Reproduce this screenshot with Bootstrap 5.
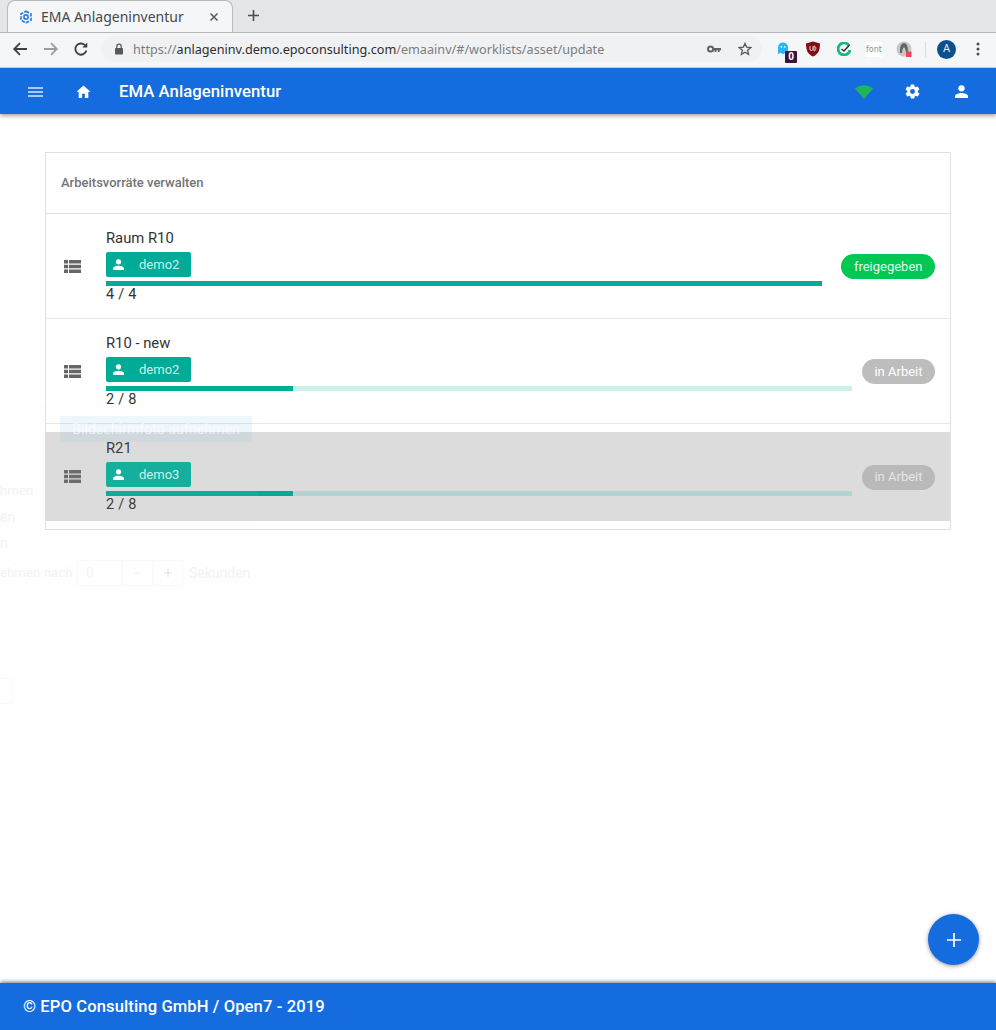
<!DOCTYPE html>
<html lang="de">
<head>
<meta charset="utf-8">
<title>EMA Anlageninventur</title>
<link href="https://cdn.jsdelivr.net/npm/bootstrap@5.3.0/dist/css/bootstrap.min.css" rel="stylesheet">
<style>
html,body{height:100%}
body{font-family:Roboto,"Liberation Sans",sans-serif;color:#333;background:#fff;width:996px;height:1030px;overflow:hidden;position:relative}
svg{flex-shrink:0}
.tabstrip{height:32px;background:#e4e6ea;padding-left:7px;position:relative}
.tabshape{width:226px;height:32px;background:#f5f6f8;border:1px solid #b8babd;border-bottom:0;border-radius:8px 8px 0 0;padding:0 13px 0 11px;font:14px "Noto Sans",Roboto,sans-serif;color:#45484c}
.tabtitle{margin-left:8px}
.tabx{margin-left:auto;font-size:0;line-height:0}
.newtab{position:absolute;left:247px;top:9px}
.toolstrip{height:36px;background:#f5f6f8;border-top:1px solid #b3b5b8;padding:0 0 2px 12px;border-bottom:1px solid #cfd3dc}
.navfwd{margin-left:15px}
.navreload{margin-left:14px}
.omnibox{width:661px;height:26px;flex-shrink:0;margin-left:12px;background:#f0f1f3;border-radius:13px;padding-left:13px;font:12.65px "Noto Sans",Roboto,sans-serif;color:#7b7e82;white-space:nowrap}
.omnibox b{font-weight:400;color:#2c2e31}
.lockglyph{margin-right:9px}
.keyicons{margin-left:auto;gap:17px;padding-right:10px}
.exticons{width:234px;flex-shrink:0;position:relative}
.ghosticon{margin-left:15px}
.extbadge{position:absolute;left:23px;top:11px;width:12px;height:12px;border-radius:1px;background:#3c1238;color:#fff;font-size:10px;font-weight:700;line-height:12px;text-align:center}
.fonticon{margin-left:15px;width:16px;font-size:8px;line-height:15px;text-align:center;color:#8d8f92;background:#fff;font-family:"DejaVu Sans",sans-serif}
.extsep{width:1px;height:15px;background:#d8dbe0;margin-left:13px}
.avatarbubble{width:19px;height:19px;background:#0b4f8c;color:#e8eef5;font-size:11px;margin-left:11px}
.appbar{height:46px;background:#156cdf;color:#fff;box-shadow:0 2px 4px rgba(0,0,0,.35);position:relative;z-index:3;padding:1px 28px 0 28px}
.appname{font-size:16.7px;font-weight:500;margin-left:28px;letter-spacing:.05px}
.barhome{margin-left:33px}
.barwifi{margin-left:auto}
.bargear{margin-left:31px}
.baruser{margin-left:34px}
.mainarea{padding:38px 45px 0 45px}
.panel{border:1px solid #e1e1e1;height:378px;background:#fff}
.panelhead{height:61px;padding-left:15px;font-size:13px;font-weight:500;color:#757575;border-bottom:1px solid #e1e1e1}
.entry{height:105px;padding:0 15px 0 18px;border-bottom:1px solid #e6e6e6;position:relative;font-size:14px;color:#333}
.entry:last-child{border-bottom:0}
.entrybody{margin-left:25px;width:746px;flex-shrink:0;padding-top:14px}
.entrybody.shortbar{width:716px}
.entrytitle{line-height:20px;height:20px;font-size:14.8px}
.userchip{width:85px;height:25px;margin-top:4px;background:#00ab97;color:#c9f0ea;border-radius:2px;padding-left:7px;font-size:13px}
.userchip span{margin-left:15px}
.trackbar{height:5px;margin-top:4px;background:#cbefe9;display:flex}
.trackfill{background:#00ab97;height:5px}
.counter{line-height:17px;font-size:14.5px;letter-spacing:.2px}
.statuspill{margin-left:auto;height:25px;margin-top:1px;border-radius:13px;padding:0 12.5px;font-size:13px;color:#fff;background:#bdbdbd;white-space:nowrap}
.statuspill.released{background:#00c853;color:#e4fbec}
.dragged{background:linear-gradient(#fff 8px,#dcdcdc 8px,#dcdcdc 97px,#fff 97px)}
.dragged .userchip{background:#0aac99}
.dragged .trackbar{background:#b3d4d0}
.dragged .trackfill{background:#09a794}
.dragged .statuspill{background:#b9b9b9;color:#e6e6e6}
.fabbtn{position:absolute;left:928px;top:914px;width:51px;height:51px;border-radius:50%;background:#156cdf;box-shadow:0 1px 4px rgba(0,0,0,.4)}
.pagefoot{position:absolute;left:0;right:0;top:983px;height:47px;background:#156cdf;color:#fff;font-size:16.6px;font-weight:500;padding:2px 0 0 23px;box-shadow:0 -1px 4px rgba(0,0,0,.55);letter-spacing:.1px}
.ghost{position:absolute;left:0;top:405px;width:258px;height:315px;background:rgba(240,240,240,.05);z-index:2;pointer-events:none;color:#f3f3f3;font-size:14px}
.ghost div{position:absolute;white-space:nowrap}
.ghostbtn{left:60px;top:11px;width:192px;height:26px;background:rgba(120,190,235,.13);border-radius:2px;color:rgba(255,255,255,.6);text-align:center;line-height:26px;font-size:14.2px}
.ghostbox{border:1px solid #fafafa;height:26px}
.ghost .g1{left:0;top:76px;font-size:13.3px}.ghost .g2{left:0;top:102px}.ghost .g3{left:0;top:128px}.ghost .g4{left:0;top:158px;font-size:13.3px}
.ghost .b1{left:77px;top:155px;width:45px;padding-left:8px;line-height:24px}
.ghost .b2{left:122px;top:155px;width:31px;text-align:center;line-height:24px}
.ghost .b3{left:153px;top:155px;width:30px;text-align:center;line-height:24px;color:#e8e8e8}
.ghost .g5{left:189px;top:158px}
.ghost .b4{left:-10px;top:273px;width:23px}
</style>
</head>
<body>
<div class="tabstrip">
  <div class="tabshape d-flex align-items-center">
    <svg width="14" height="14" viewBox="0 0 14 14"><g fill="none" stroke="#2b7de0" stroke-width="1.7"><path d="M7 1.2 12 4v6L7 12.8 2 10V4z" stroke-dasharray="3.5 1.2"/><circle cx="7" cy="7" r="2.1"/></g></svg>
    <span class="tabtitle">EMA Anlageninventur</span>
    <span class="tabx"><svg width="10" height="10" viewBox="0 0 10 10"><path d="M1.5 1.5l7 7m0-7l-7 7" stroke="#55585c" stroke-width="1.5"/></svg></span>
  </div>
  <svg class="newtab" width="13" height="13" viewBox="0 0 13 13"><path d="M6.5 1v11M1 6.5h11" stroke="#4a4d51" stroke-width="1.6"/></svg>
</div>
<div class="toolstrip d-flex align-items-center">
  <svg width="16" height="16" viewBox="0 0 16 16"><path d="M15 8H2.500M8 2.200 2.200 8 8 13.800" fill="none" stroke="#3d4043" stroke-width="1.800"/></svg>
  <svg class="navfwd" width="16" height="16" viewBox="0 0 16 16"><path d="M1 8h12.500M8 2.200 13.800 8 8 13.800" fill="none" stroke="#9a9c9f" stroke-width="1.800"/></svg>
  <svg class="navreload" width="16" height="16" viewBox="0 0 16 16"><path d="M13.400 9.500A5.600 5.600 0 1 1 12 4.200" fill="none" stroke="#3d4043" stroke-width="1.800"/><path d="M14.300 1.500v5h-5z" fill="#3d4043"/></svg>
  <div class="omnibox d-flex align-items-center">
    <svg width="10" height="12" viewBox="0 0 10 12" class="lockglyph"><rect x="1" y="5" width="8" height="6.500" rx="1" fill="#55585c"/><path d="M2.800 5V3.400a2.200 2.200 0 0 1 4.400 0V5" fill="none" stroke="#55585c" stroke-width="1.200"/></svg>
    <span>https://<b>anlageninv.demo.epoconsulting.com</b>/emaainv/#/worklists/asset/update</span>
    <div class="keyicons d-flex align-items-center">
      <svg width="14" height="8" viewBox="0 0 14 8"><circle cx="3.600" cy="4" r="2.600" fill="none" stroke="#5f6266" stroke-width="2"/><path d="M6 3h8v2.200h-1.400V7h-1.800V5.200H9.400V7H7.600V5.200H6z" fill="#5f6266"/></svg>
      <svg width="14" height="14" viewBox="0 0 16 16"><path d="M8 1.600l1.900 4.400 4.700.4-3.600 3.100 1.100 4.700L8 11.700l-4.100 2.500L5 9.500 1.400 6.400l4.700-.4z" fill="none" stroke="#55585c" stroke-width="1.500"/></svg>
    </div>
  </div>
  <div class="exticons d-flex align-items-center">
    <svg class="ghosticon" width="12" height="14" viewBox="0 0 14 17"><path d="M1 15V6a6 5.500 0 0 1 12 0v9l-3-2-3 2-3-2z" fill="#29b6f6"/><circle cx="5" cy="6" r="1" fill="#fff"/><circle cx="9" cy="6" r="1" fill="#fff"/></svg>
    <span class="extbadge">0</span>
    <svg style="margin-left:17px" width="14" height="16" viewBox="0 0 14 16"><path d="M7 .5 14 2.500c0 7-2 11-7 13C2 13.500 0 9.500 0 2.500z" fill="#800f14"/><path d="M4 5v3a1.500 1.500 0 0 0 3 0V5m1 0v5c2.500 0 2.500-5 0-5" fill="none" stroke="#f3dede" stroke-width=".9"/></svg>
    <svg style="margin-left:17px" width="14" height="14" viewBox="0 0 14 14"><path d="M12 3.500A6 6 0 1 0 13 8" fill="none" stroke="#12b886" stroke-width="2.800"/><path d="M4.500 7l2.500 2 5.500-6" fill="none" stroke="#333" stroke-width="1.600"/></svg>
    <span class="fonticon">font</span>
    <svg style="margin-left:14px" width="16" height="16" viewBox="0 0 16 16"><circle cx="8" cy="8" r="7.500" fill="#c6c6c6"/><path d="M8 2c-4 1-4 5-4 10h2c0-3 1-5 2-6 1 1 2 3 2 6h2c0-5 0-9-4-10z" fill="#666"/><rect x="10" y="10.500" width="5.500" height="5.500" fill="#ef4456"/></svg>
    <span class="extsep"></span>
    <span class="avatarbubble d-flex align-items-center justify-content-center rounded-circle">A</span>
    <svg style="margin-left:20px" width="4" height="14" viewBox="0 0 4 14"><circle cx="2" cy="2" r="1.500" fill="#4a4d51"/><circle cx="2" cy="7" r="1.500" fill="#4a4d51"/><circle cx="2" cy="12" r="1.500" fill="#4a4d51"/></svg>
  </div>
</div>
<nav class="appbar d-flex align-items-center">
  <svg width="15" height="12" viewBox="0 0 15 12"><path d="M0 2h15M0 6h15M0 10h15" stroke="#dce9fb" stroke-width="1.600"/></svg>
  <svg class="barhome" width="15" height="13" viewBox="0 0 16 14"><path d="M8 .5 .5 7.300h2.300V14h3.700V9.300h3V14h3.700V7.300h2.300z" fill="#fff"/></svg>
  <span class="appname">EMA Anlageninventur</span>
  <svg class="barwifi" width="18" height="14" viewBox="0 0 18 14"><path d="M0 3.500C5-1 13-1 18 3.500L9 14z" fill="#1fb35a"/></svg>
  <svg class="bargear" width="17" height="17" viewBox="0 0 24 24"><path fill="#fff" d="M19.400 13a7.600 7.600 0 0 0 0-2l2.100-1.600a.5.500 0 0 0 .1-.6l-2-3.500a.5.500 0 0 0-.6-.2l-2.500 1a7.300 7.300 0 0 0-1.700-1l-.4-2.700A.5.500 0 0 0 14 2h-4a.5.500 0 0 0-.5.400l-.4 2.700a7.300 7.300 0 0 0-1.700 1l-2.500-1a.5.500 0 0 0-.6.200l-2 3.500a.5.500 0 0 0 .1.600L4.600 11a7.600 7.600 0 0 0 0 2l-2.100 1.600a.5.500 0 0 0-.1.600l2 3.500c.1.200.4.300.6.200l2.500-1c.5.400 1.100.7 1.700 1l.4 2.700c0 .2.200.4.500.4h4c.3 0 .5-.2.500-.4l.4-2.700c.6-.3 1.200-.6 1.700-1l2.500 1c.2.100.5 0 .6-.2l2-3.500a.5.500 0 0 0-.1-.6zM12 15.500a3.500 3.500 0 1 1 0-7 3.500 3.500 0 0 1 0 7z"/></svg>
  <svg class="baruser" width="13" height="13" viewBox="0 0 14 14"><circle cx="7" cy="3.600" r="3.400" fill="#fff"/><path d="M0 14v-1.800C0 9.800 4.600 8.700 7 8.700s7 1.100 7 3.500V14z" fill="#fff"/></svg>
</nav>
<main class="mainarea">
  <section class="panel">
    <div class="panelhead d-flex align-items-center">Arbeitsvorräte verwalten</div>
    <div class="entry d-flex align-items-center">
      <svg width="17" height="13" viewBox="0 0 17 13"><path fill="#666" d="M0 0h4v3.500H0zM5 0h12v3.500H5zM0 4.700h4v3.500H0zM5 4.700h12v3.500H5zM0 9.400h4v3.500H0zM5 9.400h12v3.500H5z"/></svg>
      <div class="entrybody shortbar align-self-start">
        <div class="entrytitle">Raum R10</div>
        <div class="userchip d-flex align-items-center"><svg width="11" height="11" viewBox="0 0 14 14"><circle cx="7" cy="3.600" r="3.400" fill="#fff"/><path d="M0 14v-1.800C0 9.800 4.600 8.700 7 8.700s7 1.100 7 3.500V14z" fill="#fff"/></svg><span>demo2</span></div>
        <div class="trackbar"><div class="trackfill" style="width:100%"></div></div>
        <div class="counter">4 / 4</div>
      </div>
      <div class="statuspill released d-flex align-items-center">freigegeben</div>
    </div>
    <div class="entry d-flex align-items-center">
      <svg width="17" height="13" viewBox="0 0 17 13"><path fill="#666" d="M0 0h4v3.500H0zM5 0h12v3.500H5zM0 4.700h4v3.500H0zM5 4.700h12v3.500H5zM0 9.400h4v3.500H0zM5 9.400h12v3.500H5z"/></svg>
      <div class="entrybody align-self-start">
        <div class="entrytitle">R10 - new</div>
        <div class="userchip d-flex align-items-center"><svg width="11" height="11" viewBox="0 0 14 14"><circle cx="7" cy="3.600" r="3.400" fill="#fff"/><path d="M0 14v-1.800C0 9.800 4.600 8.700 7 8.700s7 1.100 7 3.500V14z" fill="#fff"/></svg><span>demo2</span></div>
        <div class="trackbar"><div class="trackfill" style="width:25%"></div></div>
        <div class="counter">2 / 8</div>
      </div>
      <div class="statuspill d-flex align-items-center">in Arbeit</div>
    </div>
    <div class="entry dragged d-flex align-items-center">
      <svg width="17" height="13" viewBox="0 0 17 13"><path fill="#666" d="M0 0h4v3.500H0zM5 0h12v3.500H5zM0 4.700h4v3.500H0zM5 4.700h12v3.500H5zM0 9.400h4v3.500H0zM5 9.400h12v3.500H5z"/></svg>
      <div class="entrybody align-self-start">
        <div class="entrytitle">R21</div>
        <div class="userchip d-flex align-items-center"><svg width="11" height="11" viewBox="0 0 14 14"><circle cx="7" cy="3.600" r="3.400" fill="#fff"/><path d="M0 14v-1.800C0 9.800 4.600 8.700 7 8.700s7 1.100 7 3.500V14z" fill="#fff"/></svg><span>demo3</span></div>
        <div class="trackbar"><div class="trackfill" style="width:25%"></div></div>
        <div class="counter">2 / 8</div>
      </div>
      <div class="statuspill d-flex align-items-center">in Arbeit</div>
    </div>
  </section>
</main>
<div class="ghost" aria-hidden="true">
  <div class="ghostbtn">Bildschirmfoto aufnehmen</div>
  <div class="g1">hmen</div>
  <div class="g2">en</div>
  <div class="g3">n</div>
  <div class="g4">ehmen nach</div>
  <div class="ghostbox b1">0</div>
  <div class="ghostbox b2">−</div>
  <div class="ghostbox b3">+</div>
  <div class="g5">Sekunden</div>
  <div class="ghostbox b4"></div>
</div>
<button type="button" class="fabbtn btn p-0 border-0 d-flex align-items-center justify-content-center" aria-label="Hinzufügen"><svg width="14" height="14" viewBox="0 0 14 14"><path d="M7 0v14M0 7h14" stroke="#fff" stroke-width="1.700"/></svg></button>
<footer class="pagefoot d-flex align-items-center">© EPO Consulting GmbH / Open7 - 2019</footer>
<script src="https://cdn.jsdelivr.net/npm/bootstrap@5.3.0/dist/js/bootstrap.bundle.min.js"></script>
</body>
</html>
